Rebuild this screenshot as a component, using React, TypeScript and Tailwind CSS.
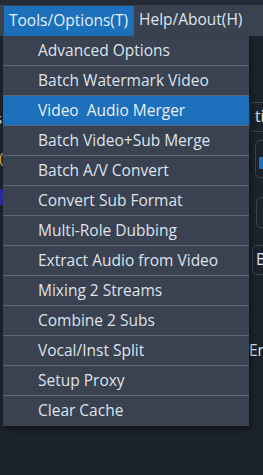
import React from "react";

const items = [
  "Advanced Options",
  "Batch Watermark Video",
  "Video  Audio Merger",
  "Batch Video+Sub Merge",
  "Batch A/V Convert",
  "Convert Sub Format",
  "Multi-Role Dubbing",
  "Extract Audio from Video",
  "Mixing 2 Streams",
  "Combine 2 Subs",
  "Vocal/Inst Split",
  "Setup Proxy",
  "Clear Cache",
];

export default function App() {
  return (
    <div
      className="relative w-[263px] h-[475px] overflow-hidden bg-[#1c232c] text-[#dde4ec]"
      style={{ fontFamily: '"Open Sans", "Noto Sans", sans-serif' }}
    >
      {/* top strip */}
      <div className="h-[5px] bg-[#242b35]" />
      {/* menubar */}
      <div className="flex h-[31px] items-stretch bg-[#3a4250] text-[15.5px]">
        <div className="ml-[4px] mt-[1px] flex w-[130px] items-center pl-[5px] bg-[#1c6fba] text-[#e6eef6]">
          Tools/Options(T)
        </div>
        <div className="flex items-center pl-[5px] pb-[2px]">Help/About(H)</div>
      </div>

      {/* content behind the menu */}
      <div className="relative flex h-[439px] justify-between">
        <div className="flex w-[3px] flex-col overflow-hidden text-[15px] leading-[20px]">
          <div className="mt-[72px] -ml-[5px] text-[#d8dee6]">s</div>
          <div className="mt-[19px] -ml-[1px] text-[#e6a84a]">(</div>
          <div className="mt-[22px] h-[16px] w-[3px] bg-[#2b2fa0]" />
          <div className="mt-[32px] -ml-[5px] text-[#e6a84a]">)</div>
        </div>
        <div className="flex w-[14px] flex-col text-[15.5px]">
          <div className="mt-[66px] flex h-[30px] w-[30px] items-center rounded-[5px] border border-[#3b4451] pl-[5px]">
            ti
          </div>
          <div className="mt-[8px] ml-[6px] flex h-[38px] w-[30px] items-start rounded-[5px] border border-[#3b4451] pl-[3px] pt-[16px]">
            <div className="h-[12px] w-[8px] bg-[#1c6fba]" />
          </div>
          <div className="mt-[19px] ml-[7px] h-[31px] w-[30px] rounded-[5px] border border-[#3b4451]" />
          <div className="mt-[17px] ml-[3px] flex h-[30px] w-[30px] items-center rounded-[5px] border border-[#3b4451] pl-[3px]">
            B
          </div>
          <div className="mt-[64px] whitespace-nowrap">En</div>
        </div>

        {/* dropdown */}
        <div className="absolute left-[3px] top-0 w-[246px] bg-[#3a4150] shadow-[2px_3px_6px_rgba(0,0,0,0.45)]">
          {items.map((label, i) => (
            <div
              key={i}
              className={`flex h-[30px] items-center whitespace-pre pl-[35px] text-[15.5px] ${
                i < items.length - 1 ? "border-b border-[#5c6776]" : ""
              } ${i === 2 ? "bg-[#1c6fba] text-[#e8eef5]" : ""}`}
            >
              {label}
            </div>
          ))}
        </div>
      </div>
    </div>
  );
}
